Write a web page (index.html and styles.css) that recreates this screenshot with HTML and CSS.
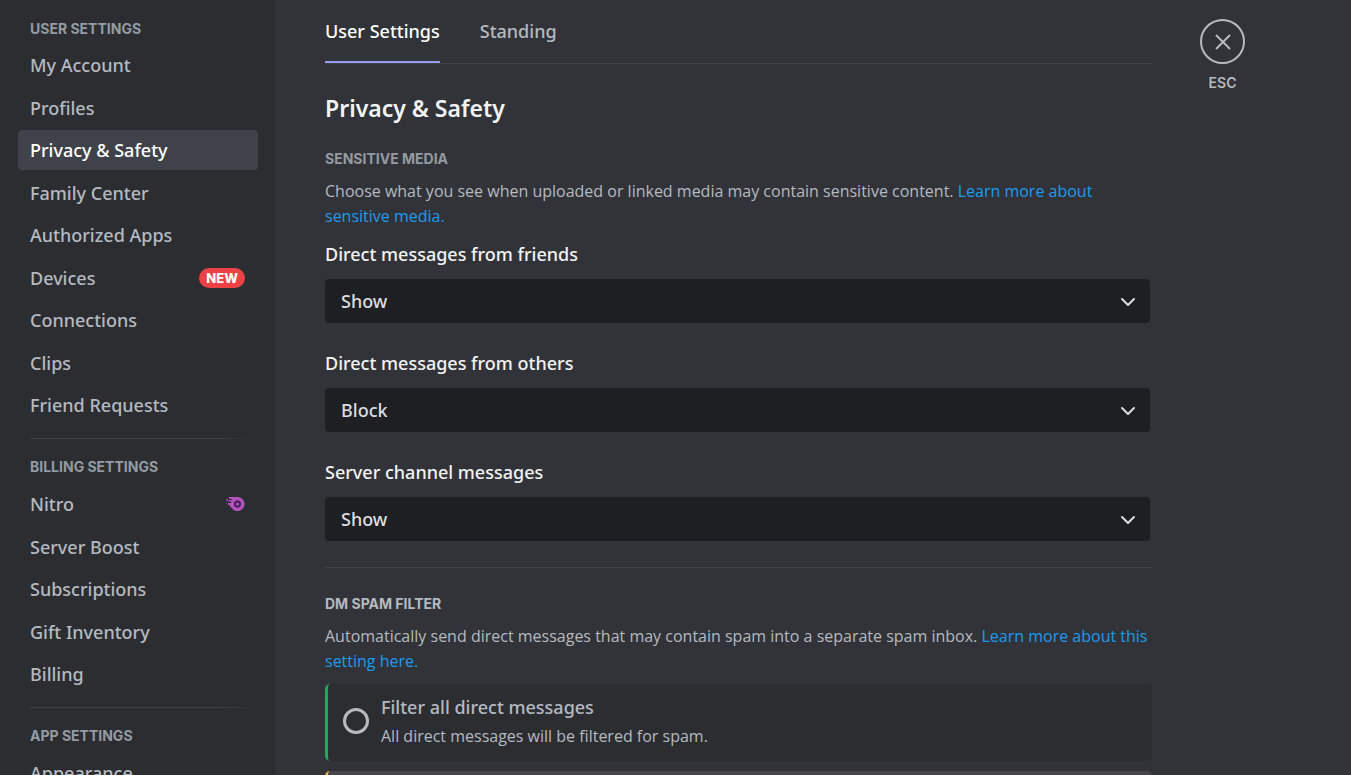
FILE: index.html
```html
<!DOCTYPE html>
<html lang="en">
<head>
<meta charset="utf-8">
<meta name="viewport" content="width=device-width, initial-scale=1">
<title>Privacy &amp; Safety</title>
<link rel="stylesheet" href="styles.css">
</head>
<body>
<div class="app">
  <nav class="sidebar" aria-label="Settings">
    <section class="nav-group">
      <h2 class="eyebrow">USER SETTINGS</h2>
      <ul class="nav-list">
        <li><a class="nav-link" href="#account">My Account</a></li>
        <li><a class="nav-link" href="#profiles">Profiles</a></li>
        <li><a class="nav-link active" href="#privacy" aria-current="page">Privacy &amp; Safety</a></li>
        <li><a class="nav-link" href="#family">Family Center</a></li>
        <li><a class="nav-link" href="#apps">Authorized Apps</a></li>
        <li><a class="nav-link" href="#devices">Devices <span class="badge">NEW</span></a></li>
        <li><a class="nav-link" href="#connections">Connections</a></li>
        <li><a class="nav-link" href="#clips">Clips</a></li>
        <li><a class="nav-link" href="#requests">Friend Requests</a></li>
      </ul>
    </section>
    <section class="nav-group">
      <h2 class="eyebrow">BILLING SETTINGS</h2>
      <ul class="nav-list">
        <li><a class="nav-link" href="#nitro">Nitro
          <svg class="nitro" viewBox="0 0 20 16" aria-hidden="true">
            <path fill="#b453bd" fill-rule="evenodd" d="M4 1H12.500A7 7 0 1 1 6.200 11H5V9H3V7H6L6 5H4V4H7V3H4ZM12.500 4.600A3.400 3.400 0 1 0 12.500 11.400A3.400 3.400 0 1 0 12.500 4.600Z"/>
            <path fill="#8a3fa5" d="M1 3H3V5H1ZM1 7H2V8H1ZM3 5H5V6H3Z"/>
            <circle cx="12.500" cy="8" r="3.400" fill="#4b2060"/>
            <circle cx="12.500" cy="8" r="1.600" fill="#b453bd"/>
          </svg></a></li>
        <li><a class="nav-link" href="#boost">Server Boost</a></li>
        <li><a class="nav-link" href="#subscriptions">Subscriptions</a></li>
        <li><a class="nav-link" href="#gifts">Gift Inventory</a></li>
        <li><a class="nav-link" href="#billing">Billing</a></li>
      </ul>
    </section>
    <section class="nav-group">
      <h2 class="eyebrow">APP SETTINGS</h2>
      <ul class="nav-list">
        <li><a class="nav-link" href="#appearance">Appearance</a></li>
      </ul>
    </section>
  </nav>

  <main class="content">
    <div class="tabs" role="tablist">
      <button class="tab selected" role="tab" aria-selected="true">User Settings</button>
      <button class="tab" role="tab" aria-selected="false">Standing</button>
    </div>
    <h1 class="title">Privacy &amp; Safety</h1>

    <section class="panel">
      <h2 class="eyebrow">SENSITIVE MEDIA</h2>
      <p class="description">Choose what you see when uploaded or linked media may contain sensitive content. <a href="#learn-media">Learn more about sensitive media.</a></p>
      <div class="fields">
        <div class="field">
          <label for="friends">Direct messages from friends</label>
          <div class="select-box">
            <select id="friends"><option>Show</option></select>
            <svg class="chevron" viewBox="0 0 16 10" aria-hidden="true"><path d="M2 2L8 8L14 2"/></svg>
          </div>
        </div>
        <div class="field">
          <label for="others">Direct messages from others</label>
          <div class="select-box">
            <select id="others"><option>Block</option></select>
            <svg class="chevron" viewBox="0 0 16 10" aria-hidden="true"><path d="M2 2L8 8L14 2"/></svg>
          </div>
        </div>
        <div class="field">
          <label for="server">Server channel messages</label>
          <div class="select-box">
            <select id="server"><option>Show</option></select>
            <svg class="chevron" viewBox="0 0 16 10" aria-hidden="true"><path d="M2 2L8 8L14 2"/></svg>
          </div>
        </div>
      </div>
    </section>

    <section class="panel spam">
      <h2 class="eyebrow bright">DM SPAM FILTER</h2>
      <p class="description">Automatically send direct messages that may contain spam into a separate spam inbox. <a href="#learn-spam">Learn more about this setting here.</a></p>
      <div class="options">
        <label class="option green">
          <input type="radio" name="spam">
          <span class="option-text">
            <span class="option-title">Filter all direct messages</span>
            <span class="option-note">All direct messages will be filtered for spam.</span>
          </span>
        </label>
        <div class="option amber"></div>
      </div>
    </section>
  </main>

  <aside class="close-area">
    <button class="close" id="close" aria-labelledby="esc">
      <svg viewBox="0 0 16 16" aria-hidden="true"><path d="M1 1L15 15M15 1L1 15"/></svg>
    </button>
    <label class="esc" id="esc" for="close">ESC</label>
  </aside>
</div>
</body>
</html>
```

FILE: styles.css
```css
* {
  box-sizing: border-box;
}

body {
  margin: 0;
  background: #313338;
  color: #b5bac1;
  font-family: "Noto Sans", "Open Sans", sans-serif;
  font-size: 18px;
  font-weight: 500;
}

h1,
h2,
p,
ul {
  margin: 0;
  padding: 0;
}

button,
select {
  font: inherit;
}

a {
  color: #1e9bee;
  text-decoration: none;
}

.app {
  display: flex;
  height: 100vh;
  overflow: hidden;
}

.eyebrow {
  color: #949ba4;
  font-family: Inter, sans-serif;
  font-size: 14px;
  font-weight: 700;
  line-height: 20px;
}

.bright {
  color: #b5bac1;
}

/* Sidebar */

.sidebar {
  flex: 0 0 275px;
  padding: 19px 17px 0 18px;
  background: #2b2d31;
}

.nav-group .eyebrow {
  padding: 0 12px;
}

.nav-group + .nav-group {
  margin-top: 13px;
}

.nav-group + .nav-group::before {
  content: "";
  display: block;
  height: 1px;
  margin: 0 4px 18px 12px;
  background: linear-gradient(to right, #3f4147 85%, #2b2d31);
}

.nav-list {
  list-style: none;
  padding-top: 6px;
}

.nav-group + .nav-group .nav-list {
  padding-top: 7px;
}

.nav-list li + li {
  margin-top: 2px;
}

.nav-list li:nth-child(even) {
  margin-top: 3px;
}

.nav-link {
  display: flex;
  align-items: center;
  justify-content: space-between;
  height: 40px;
  padding: 0 13px 0 12px;
  border-radius: 4px;
  color: #b5bac1;
}

.nav-link.active {
  background: #404249;
  color: #fff;
}

.badge {
  padding: 0 7px;
  border-radius: 10px;
  background: #ed4245;
  color: #fff;
  font-family: Inter, sans-serif;
  font-size: 13px;
  font-weight: 800;
  line-height: 20px;
}

.nitro {
  width: 20px;
  height: 16px;
}

/* Content */

.content {
  flex: 0 1 877px;
  padding-left: 50px;
}

.tabs {
  display: flex;
  gap: 40px;
  height: 64px;
  border-bottom: 1px solid #3f4147;
}

.tab {
  padding: 0;
  border: 0;
  border-bottom: 2px solid transparent;
  background: none;
  color: #b5bac1;
}

.tab.selected {
  border-color: #949cf7;
  color: #fff;
}

.title {
  margin-top: 29px;
  color: #f2f3f5;
  font-size: 23px;
  font-weight: 600;
  line-height: 30px;
}

.panel {
  margin-top: 26px;
}

.description {
  margin-top: 10px;
  font-family: "Open Sans", "Noto Sans", sans-serif;
  font-size: 16px;
  font-weight: 400;
  line-height: 25px;
}

.fields {
  display: grid;
  gap: 27px;
  margin-top: 12px;
  padding-right: 2px;
}

.field {
  display: grid;
  gap: 12px;
  color: #f2f3f5;
  line-height: 26px;
}

.select-box {
  position: relative;
}

select {
  display: block;
  appearance: none;
  width: 100%;
  height: 44px;
  padding: 0 16px;
  border: 0;
  border-radius: 4px;
  background: #1e1f22;
  color: #dbdee1;
}

.chevron {
  position: absolute;
  top: 18px;
  right: 14px;
  width: 16px;
  height: 10px;
  fill: none;
  stroke: #dbdee1;
  stroke-width: 2;
  stroke-linecap: round;
  stroke-linejoin: round;
  pointer-events: none;
}

.spam {
  padding-top: 26px;
  border-top: 1px solid #3f4147;
}

.options {
  display: grid;
  gap: 10px;
  margin-top: 10px;
}

.option {
  display: flex;
  align-items: center;
  gap: 12px;
  min-height: 77px;
  padding: 0 15px 4px;
  border-left: 3px solid;
  border-radius: 5px;
  background: #2b2d31;
}

.green {
  border-color: #23a55a;
}

.amber {
  border-color: #f0b232;
  background: #46454c;
}

.option input {
  appearance: none;
  width: 26px;
  height: 26px;
  margin: 0;
  border: 3px solid #b5bac1;
  border-radius: 50%;
}

.option-text {
  display: grid;
  gap: 4px;
}

.option-title {
  line-height: 26px;
}

.option-note {
  font-family: "Open Sans", "Noto Sans", sans-serif;
  font-size: 16px;
  font-weight: 400;
  line-height: 24px;
}

/* Close */

.close-area {
  display: flex;
  flex-direction: column;
  align-items: center;
  gap: 9px;
  margin-left: 48px;
  padding-top: 19px;
}

.close {
  display: grid;
  place-items: center;
  width: 45px;
  height: 45px;
  padding: 0;
  border: 2px solid #b5bac1;
  border-radius: 50%;
  background: none;
}

.close svg {
  width: 16px;
  height: 16px;
  stroke: #b5bac1;
  stroke-width: 2;
}

.esc {
  font-family: Inter, sans-serif;
  font-size: 14px;
  font-weight: 600;
  line-height: 20px;
}
```
